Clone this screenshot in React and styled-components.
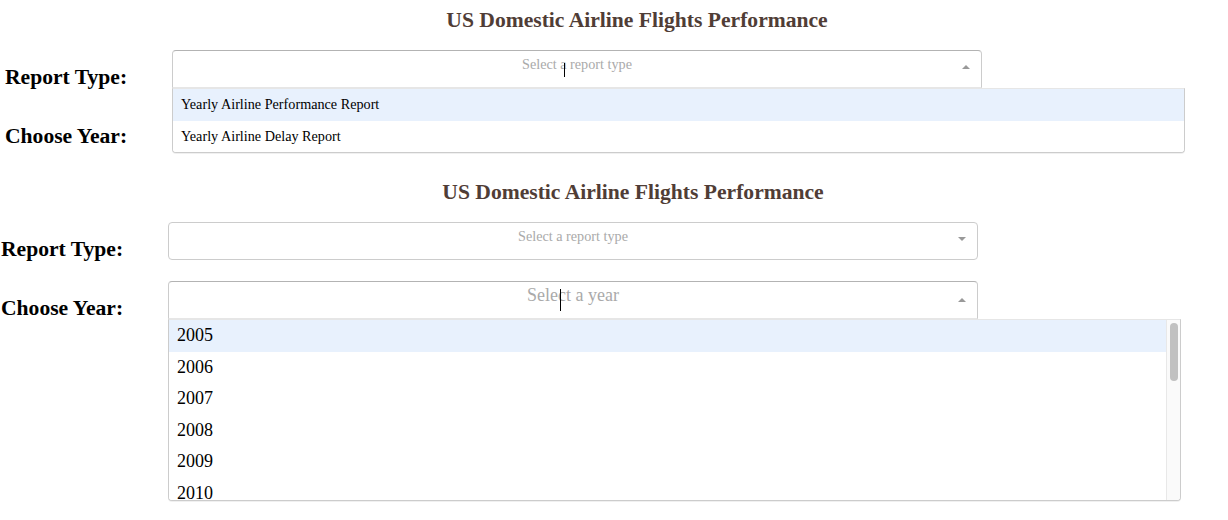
import React from "react";
import styled, { createGlobalStyle } from "styled-components";

// only the rows that fit in the open list are drawn; the thumb stands for the rest
const YEARS = Array.from({ length: 16 }, (_, i) => 2005 + i).slice(0, 6);
const REPORTS = ["Yearly Airline Performance Report", "Yearly Airline Delay Report"];

export default function App() {
  return (
    <>
      <GlobalStyle />
      <Page>
        {/* first capture: report type list open */}
        <Section $left={5}>
          <Title>US Domestic Airline Flights Performance</Title>
          <Rows>
            <Row>
              <Label>Report Type:</Label>
              <DropWrap>
                <Control $open>
                  <Value $font={14.2} $top={5}>Select a report type</Value>
                  <ArrowZone $top={14}><Arrow $up /></ArrowZone>
                  <Caret $top={12} $h={14} />
                </Control>
                <Menu>
                  <List>
                    {REPORTS.map((r, i) => (
                      <Option key={r} $focused={i === 0} $font={14.2}>{r}</Option>
                    ))}
                  </List>
                </Menu>
              </DropWrap>
            </Row>
            <Row>
              <Label>Choose Year:</Label>
              <DropWrap>
                <Control>
                  <Value $font={18} $top={3}>Select a year</Value>
                  <ArrowZone $top={14}><Arrow /></ArrowZone>
                </Control>
              </DropWrap>
            </Row>
          </Rows>
        </Section>

        {/* second capture: year list open */}
        <Section $left={1} $tall>
          <Title>US Domestic Airline Flights Performance</Title>
          <Rows>
            <Row>
              <Label>Report Type:</Label>
              <DropWrap>
                <Control>
                  <Value $font={14.2} $top={5}>Select a report type</Value>
                  <ArrowZone $top={14}><Arrow /></ArrowZone>
                </Control>
              </DropWrap>
            </Row>
            <Row>
              <Label>Choose Year:</Label>
              <DropWrap>
                <Control $open>
                  <Value $font={18} $top={3}>Select a year</Value>
                  <ArrowZone $top={16}><Arrow $up /></ArrowZone>
                  <Caret $top={7} $h={22} />
                </Control>
                <Menu>
                  <List>
                    {YEARS.map((y, i) => (
                      <Option key={y} $focused={i === 0} $font={18}>{y}</Option>
                    ))}
                  </List>
                  <ScrollTrack>
                    <Thumb />
                  </ScrollTrack>
                </Menu>
              </DropWrap>
            </Row>
          </Rows>
        </Section>
      </Page>
    </>
  );
}

const GlobalStyle = createGlobalStyle`
  html, body {
    margin: 0;
    padding: 0;
    background: #fff;
    overflow: hidden;
  }
  body {
    font-family: "Liberation Serif", "Times New Roman", serif;
    color: #000;
  }
`;

const Page = styled.div`
  width: 1228px;
  height: 520px;
  overflow: hidden;
`;

const Section = styled.section`
  width: 1264px;
  height: ${(p) => (p.$tall ? "348px" : "172px")};
  padding-left: ${(p) => p.$left}px;
  overflow: hidden;
  position: relative;
`;

const Title = styled.h1`
  margin: 8px 0 18px;
  font-size: 21.6px;
  line-height: 24px;
  font-weight: bold;
  text-align: center;
  color: #503d36;
`;

const Rows = styled.div`
  display: flex;
  flex-direction: column;
  gap: 20px;
`;

const Row = styled.div`
  display: flex;
  align-items: flex-start;
`;

const Label = styled.h2`
  width: 167px;
  flex: none;
  margin: 15px 0 0;
  font-size: 21.6px;
  line-height: 24px;
  font-weight: bold;
  white-space: nowrap;
`;

const DropWrap = styled.div`
  position: relative;
  width: 810px;
`;

const Control = styled.div`
  position: relative;
  display: flex;
  box-sizing: border-box;
  height: 38px;
  border: 1px solid #ccc;
  border-top-color: ${(p) => (p.$open ? "#b3b3b3" : "#ccc")};
  border-bottom-color: ${(p) => (p.$open ? "#e6e6e6" : "#ccc")};
  border-radius: ${(p) => (p.$open ? "4px 4px 0 0" : "4px")};
  background: #fff;
`;

const Value = styled.div`
  flex: 1;
  padding: ${(p) => p.$top}px 0 0 30px;
  font-size: ${(p) => p.$font}px;
  line-height: ${(p) => Math.round(p.$font) + 3}px;
  color: #aaa;
  text-align: center;
  white-space: nowrap;
`;

const ArrowZone = styled.div`
  width: 30px;
  display: flex;
  justify-content: center;
  align-items: flex-start;
  padding-top: ${(p) => p.$top}px;
`;

const Arrow = styled.span`
  width: 0;
  height: 0;
  border-style: solid;
  border-color: ${(p) =>
    p.$up ? "transparent transparent #999" : "#999 transparent transparent"};
  border-width: ${(p) => (p.$up ? "0 4px 4px" : "4px 4px 0")};
`;

const Caret = styled.span`
  position: absolute;
  left: 391px;
  top: ${(p) => p.$top}px;
  width: 1px;
  height: ${(p) => p.$h}px;
  background: #000;
`;

const Menu = styled.div`
  position: absolute;
  z-index: 2;
  top: 38px;
  left: 0;
  width: 1013px;
  max-height: 182px;
  display: flex;
  box-sizing: border-box;
  border: 1px solid #ccc;
  border-top-color: #e6e6e6;
  border-radius: 0 0 4px 4px;
  background: #fff;
  box-shadow: 0 1px 0 rgba(0, 0, 0, 0.06);
  overflow: hidden;
`;

const List = styled.div`
  flex: 1;
  max-height: 180px;
  overflow: hidden;
`;

const ScrollTrack = styled.div`
  width: 14px;
  flex: none;
  box-sizing: border-box;
  padding: 3px;
  background: #fafafa;
  border-left: 1px solid #e8e8e8;
`;

const Thumb = styled.div`
  width: 8px;
  height: 58px;
  border-radius: 4px;
  background: #c1c1c1;
`;

const Option = styled.div`
  box-sizing: border-box;
  height: 31.5px;
  padding: 0 8px;
  display: flex;
  align-items: center;
  font-size: ${(p) => p.$font}px;
  color: #000;
  background: ${(p) => (p.$focused ? "#e8f1fd" : "#fff")};
  white-space: nowrap;
`;
